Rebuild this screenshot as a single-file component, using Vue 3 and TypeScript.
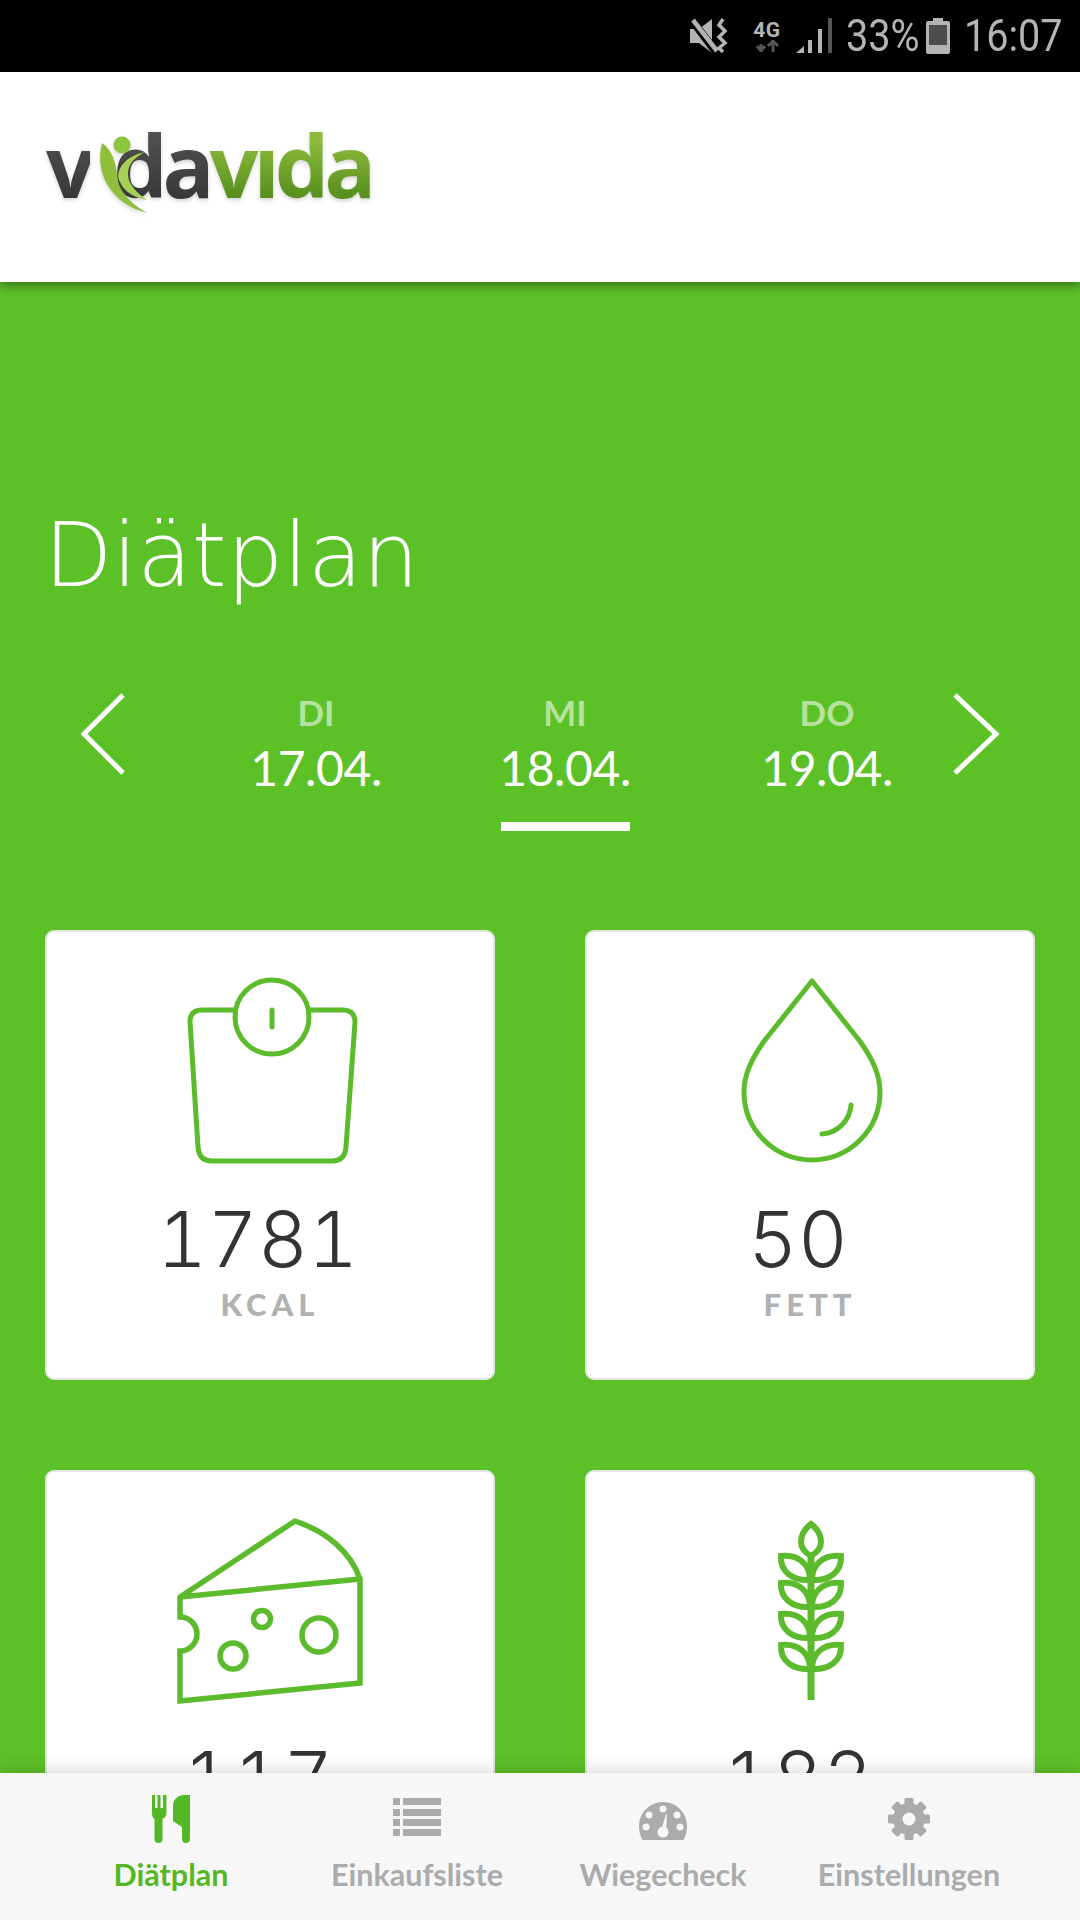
<script setup lang="ts">
interface Day { dow: string; date: string; active?: boolean; cls: string }
const days: Day[] = [
  { dow: 'DI', date: '17.04.', cls: 'd1' },
  { dow: 'MI', date: '18.04.', active: true, cls: 'd2' },
  { dow: 'DO', date: '19.04.', cls: 'd3' },
]
interface Tab { label: string; icon: string; active?: boolean }
const tabs: Tab[] = [
  { label: 'Diätplan', icon: 'food', active: true },
  { label: 'Einkaufsliste', icon: 'list' },
  { label: 'Wiegecheck', icon: 'gauge' },
  { label: 'Einstellungen', icon: 'gear' },
]
const leafRows = [0, 27, 58, 89]
const gearTeeth = [0, 45, 90, 135, 180, 225, 270, 315]
</script>

<template>
  <div class="phone">
    <div class="status">
      <svg class="ic-mute" width="38" height="36" viewBox="0 0 38 36">
        <path d="M0 11h9L22 1v34L9 25H0z" fill="#b4b4b4" />
        <path d="M1 1l25 33" stroke="#000" stroke-width="8" />
        <path d="M3 2l24 31" stroke="#b4b4b4" stroke-width="4.500" />
        <path d="M33 1l-4 6 6 6-6 6 6 6-6 5 4 4" fill="none" stroke="#b4b4b4" stroke-width="3.500" />
      </svg>
      <div class="net">
        <span class="net-t">4G</span>
        <svg width="24" height="12" viewBox="0 0 24 12">
          <path d="M6 11V4M2 6l4 5 4-5" fill="none" stroke="#555" stroke-width="3" />
          <path d="M18 12V2M13 6l5-5 5 5" fill="none" stroke="#555" stroke-width="3" />
        </svg>
      </div>
      <svg class="ic-signal" width="36" height="36" viewBox="0 0 36 36">
        <path d="M0 35l8-7v7z" fill="#b4b4b4" />
        <rect x="12" y="22" width="4" height="13" fill="#b4b4b4" />
        <rect x="22" y="11" width="4" height="24" fill="#b4b4b4" />
        <rect x="32" y="0" width="4" height="35" fill="#555" />
      </svg>
      <span class="st-text pct">33%</span>
      <svg class="ic-batt" width="24" height="36" viewBox="0 0 24 36">
        <path d="M7 0h10v3h5a2 2 0 0 1 2 2v29a2 2 0 0 1-2 2H2a2 2 0 0 1-2-2V5a2 2 0 0 1 2-2h5z" fill="#b4b4b4" />
        <rect x="3" y="7" width="18" height="20" fill="#4d4d4d" />
      </svg>
      <span class="st-text clock">16:07</span>
    </div>

    <header class="head">
      <div class="logo">
        <span class="lg-dark">v</span><span class="lg-hide">i</span><span class="lg-dark">da</span><span class="lg-green">vıda</span>
        <svg class="swoosh" width="70" height="110" viewBox="0 0 70 110">
          <circle cx="32" cy="31" r="8.500" fill="#8cc63f" />
          <path d="M12 29C4 60 22 90 57 99C38 88 28 75 27 62C26 48 22 36 12 29z" fill="#8fbf3a" />
          <path d="M55 38C34 42 24 58 30 68C34 78 45 84 57 86C46 78 38 70 38 60C38 50 44 44 55 38z" fill="#a6cf55" />
        </svg>
      </div>
    </header>

    <main class="content">
      <h1 class="title">Diätplan</h1>

      <div class="picker">
        <svg class="arrow" width="50" height="84" viewBox="0 0 50 84">
          <path d="M44 3L5 42l39 39" fill="none" stroke="#fff" stroke-width="5" />
        </svg>
        <div class="days">
          <div v-for="d in days" :key="d.date" class="day" :class="d.cls">
            <span class="dow">{{ d.dow }}</span>
            <span class="date">{{ d.date }}</span>
            <span class="bar" :class="{ on: d.active }"></span>
          </div>
        </div>
        <svg class="arrow" width="50" height="84" viewBox="0 0 50 84">
          <path d="M4 3l41 39L4 81" fill="none" stroke="#fff" stroke-width="5" />
        </svg>
      </div>

      <div class="cards">
        <section class="card">
          <svg class="art" width="200" height="200" viewBox="170 970 200 200">
            <g fill="none" stroke="#5cbb2c" stroke-width="5">
              <path d="M235 1010H202Q190 1010 190 1022L198 1147Q199 1161 212 1161H332Q345 1161 346 1147L355 1022Q355 1010 343 1010H309" />
              <circle cx="272" cy="1017" r="37" />
              <path d="M272 1010v17" stroke-width="5" stroke-linecap="round" />
            </g>
          </svg>
          <div class="num">1781</div>
          <div class="unit">KCAL</div>
        </section>

        <section class="card">
          <svg class="art" width="200" height="200" viewBox="710 970 200 200">
            <g fill="none" stroke="#5cbb2c" stroke-width="5" stroke-linejoin="round">
              <path d="M812 981L765 1040C752 1058 744 1074 744 1092A68 68 0 0 0 880 1092C880 1074 872 1058 859 1040z" />
              <path d="M851 1105C850 1120 838 1133 822 1134" stroke-width="5" stroke-linecap="round" />
            </g>
          </svg>
          <div class="num">50</div>
          <div class="unit">FETT</div>
        </section>

        <section class="card">
          <svg class="art" width="200" height="200" viewBox="170 1510 200 200">
            <g fill="none" stroke="#5cbb2c" stroke-width="5.500">
              <path d="M180 1597L295 1521C328 1532 351 1553 360 1579z" stroke-linejoin="round" />
              <path d="M180 1597v20a17 17 0 0 1 0 34v50l180-18V1579" />
              <circle cx="262" cy="1619" r="8.500" />
              <circle cx="233" cy="1656" r="13" />
              <circle cx="319" cy="1635" r="17" />
            </g>
          </svg>
          <div class="num">117</div>
        </section>

        <section class="card">
          <svg class="art" width="200" height="200" viewBox="710 1510 200 200">
            <g fill="none" stroke="#5cbb2c" stroke-width="6">
              <path d="M811 1700V1555" stroke-width="7" />
              <path d="M811 1524C803 1530 801 1537 801 1542C801 1547 804 1552 811 1556C818 1552 821 1547 821 1542C821 1537 819 1530 811 1524z" />
              <g v-for="y in leafRows" :key="y" :transform="`translate(0 ${y})`">
                <path d="M810 1580C793 1581 780 1572 781 1556C798 1554 810 1564 810 1580z" />
                <path d="M812 1580C829 1581 842 1572 841 1556C824 1554 812 1564 812 1580z" />
              </g>
            </g>
          </svg>
          <div class="num">182</div>
        </section>
      </div>
    </main>

    <nav class="tabs">
      <div v-for="t in tabs" :key="t.label" class="tab" :class="{ active: t.active }">
        <div class="tab-ic">
          <svg v-if="t.icon === 'food'" class="i-food" width="40" height="48" viewBox="0 0 40 48">
            <path d="M1 0h3v13h2.500V0h3v13H12V0h3.500v17c0 4-2 6-4 7v20a4 4 0 0 1-8 0V24C1.500 23 1 21 1 17z" fill="currentColor" />
            <path d="M22 11C22 4 27 0 33 0h6v44a4 4 0 0 1-8 0V32l-9-6z" fill="currentColor" />
          </svg>
          <svg v-else-if="t.icon === 'list'" class="i-list" width="48" height="38" viewBox="0 0 48 38">
            <g fill="currentColor">
              <rect x="0" y="0" width="7" height="7" /><rect x="10" y="0" width="38" height="7" />
              <rect x="0" y="11" width="7" height="7" /><rect x="10" y="11" width="38" height="7" />
              <rect x="0" y="21" width="7" height="7" /><rect x="10" y="21" width="38" height="7" />
              <rect x="0" y="31" width="7" height="7" /><rect x="10" y="31" width="38" height="7" />
            </g>
          </svg>
          <svg v-else-if="t.icon === 'gauge'" class="i-gauge" width="48" height="38" viewBox="0 0 48 38">
            <path d="M24 0a24 24 0 0 1 24 24c0 5-1 9-3 13a2 2 0 0 1-2 1H5a2 2 0 0 1-2-1C1 33 0 29 0 24A24 24 0 0 1 24 0z" fill="currentColor" />
            <g fill="#f7f7f7">
              <circle cx="24" cy="7" r="3.500" />
              <circle cx="10" cy="13" r="3.500" />
              <circle cx="38" cy="13" r="3.500" />
              <circle cx="7" cy="25" r="3.500" />
              <circle cx="41" cy="25" r="3.500" />
              <circle cx="24" cy="30" r="5.500" />
              <path d="M22 29l5-17 1 0-1 18z" />
            </g>
          </svg>
          <svg v-else class="i-gear" width="42" height="42" viewBox="0 0 42 42">
            <g fill="currentColor">
              <rect v-for="a in gearTeeth" :key="a" x="16.500" y="0" width="9" height="10" rx="1.500" :transform="`rotate(${a} 21 21)`" />
              <circle cx="21" cy="21" r="16" />
            </g>
            <circle cx="21" cy="21" r="6.500" fill="#f7f7f7" />
          </svg>
        </div>
        <span class="tab-l">{{ t.label }}</span>
      </div>
    </nav>
  </div>
</template>

<style>
html, body { margin: 0; padding: 0; }
</style>

<style scoped>
.phone {
  width: 1080px;
  height: 1920px;
  display: flex;
  flex-direction: column;
  overflow: hidden;
  background: #5cc027;
  font-family: Lato, "Liberation Sans", sans-serif;
}
.status {
  height: 72px;
  flex: none;
  background: #000;
  display: flex;
  align-items: center;
  justify-content: flex-end;
  padding-right: 20px;
  color: #b4b4b4;
  box-sizing: border-box;
}
.ic-mute { margin-right: 23px; }
.net { width: 32px; display: flex; flex-direction: column; align-items: center; margin-right: 13px; }
.net-t { font: 700 21px/20px Roboto, sans-serif; letter-spacing: 0.5px; }
.ic-signal { margin-right: 14px; }
.st-text { font-family: Roboto, sans-serif; font-size: 44px; line-height: 72px; display: inline-block; transform-origin: left center; transform: scaleX(.9); }
.pct { width: 72px; margin-right: 8px; }
.ic-batt { margin-right: 14px; }
.clock { width: 96px; }

.head {
  height: 210px;
  flex: none;
  background: #fff;
  box-shadow: 0 4px 9px rgba(0, 0, 0, .38);
  position: relative;
  z-index: 2;
  padding: 43px 0 0 46px;
  box-sizing: border-box;
}
.logo {
  position: relative;
  display: inline-block;
  font: 700 86px/100px "Open Sans", sans-serif;
  letter-spacing: -5px;
  filter: drop-shadow(0 2px 2px rgba(0, 0, 0, .18));
}
.lg-dark {
  background: linear-gradient(#5a5a5a, #2f2f2f);
  -webkit-background-clip: text;
  background-clip: text;
  color: transparent;
}
.lg-green {
  background: linear-gradient(#8cba3a 30%, #3e7a10);
  -webkit-background-clip: text;
  background-clip: text;
  color: transparent;
}
.lg-hide { color: transparent; margin-right: 2px; }
.swoosh { position: absolute; left: 44px; top: -1px; }

.content { flex: 1; min-height: 0; overflow: hidden; }
.title {
  margin: 0;
  padding: 219px 0 0 44px;
  font: 200 89px/108px "DejaVu Sans", sans-serif;
  color: #fff;
}
.picker {
  display: flex;
  align-items: flex-start;
  margin-top: 83px;
  padding-left: 79px;
  height: 238px;
}
.arrow { flex: none; }
.days { display: flex; width: 822px; padding-left: 122px; box-sizing: border-box; }
.day { display: flex; flex-direction: column; align-items: center; width: 130px; }
.d1 { margin-right: 119px; }
.d2 { margin-right: 132px; }
.dow { font-size: 35px; line-height: 40px; font-weight: 700; color: #b5e39d; }
.date { font-size: 48px; line-height: 58px; letter-spacing: -0.4px; color: #fff; margin-top: 7px; }
.bar { width: 129px; height: 9px; margin-top: 25px; }
.bar.on { background: #fff; }

.cards {
  display: grid;
  grid-template-columns: 450px 450px;
  grid-auto-rows: 450px;
  gap: 90px;
  padding: 0 45px;
}
.card {
  background: #fff;
  border: 2px solid #e2e6e2;
  border-radius: 9px;
  box-sizing: border-box;
  display: flex;
  flex-direction: column;
  align-items: center;
  padding-top: 38px;
}
.art { display: block; flex: none; overflow: visible; }
.num {
  font: 350 77px/90px Inter, sans-serif;
  font-variant-numeric: tabular-nums;
  font-feature-settings: "tnum" 1;
  letter-spacing: 0.5px;
  color: #333;
  margin-top: 24px;
  padding-right: 24px;
}
.unit {
  font: 900 31px/34px Lato, sans-serif;
  letter-spacing: 5px;
  color: #b0b1b1;
  margin-top: 3px;
}

.tabs {
  height: 147px;
  flex: none;
  background: #f7f7f7;
  box-shadow: 0 -4px 16px rgba(0, 0, 0, .13);
  position: relative;
  z-index: 2;
  display: grid;
  grid-template-columns: repeat(4, 246px);
  padding: 0 48px;
  box-sizing: border-box;
}
.tab {
  display: flex;
  flex-direction: column;
  align-items: center;
  color: #a9abac;
  white-space: nowrap;
}
.tab.active { color: #54b826; }
.tab-ic { height: 74px; }
.tab-ic svg { display: block; }
.i-food { margin-top: 22px; }
.i-list { margin-top: 25px; }
.i-gauge { margin-top: 29px; }
.i-gear { margin-top: 25px; }
.tab-l { font-size: 30.5px; font-weight: 700; line-height: 40px; margin-top: 7px; }
</style>
